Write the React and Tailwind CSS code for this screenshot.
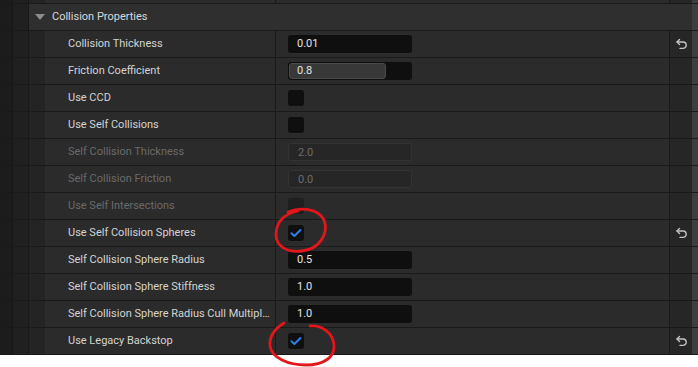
import React from 'react';

const rows = [
  { label: 'Collision Thickness', kind: 'num', value: '0.01', reset: true },
  { label: 'Friction Coefficient', kind: 'slider', value: '0.8' },
  { label: 'Use CCD', kind: 'check' },
  { label: 'Use Self Collisions', kind: 'check' },
  { label: 'Self Collision Thickness', kind: 'num', value: '2.0', disabled: true },
  { label: 'Self Collision Friction', kind: 'num', value: '0.0', disabled: true },
  { label: 'Use Self Intersections', kind: 'check', disabled: true },
  { label: 'Use Self Collision Spheres', kind: 'check', checked: true, reset: true },
  { label: 'Self Collision Sphere Radius', kind: 'num', value: '0.5' },
  { label: 'Self Collision Sphere Stiffness', kind: 'num', value: '1.0' },
  { label: 'Self Collision Sphere Radius Cull Multiplier', kind: 'num', value: '1.0' },
  { label: 'Use Legacy Backstop', kind: 'check', checked: true, reset: true },
];

function ResetIcon() {
  return (
    <svg width="13" height="12" viewBox="0 0 13 12" fill="none" stroke="#c4c4c4" strokeWidth="1.4" strokeLinecap="round" strokeLinejoin="round">
      <path d="M4.5 1.5 L2 4 L4.5 6.5" />
      <path d="M2 4 H8 a3.2 3.2 0 0 1 0 6.4 H5" />
    </svg>
  );
}

function Gutter() {
  return (
    <>
      <div className="w-[13px] shrink-0 bg-[#1c1c1c] border-r border-[#161616]" />
      <div className="w-[16px] shrink-0 bg-[#202020] border-r border-[#181818]" />
    </>
  );
}

function Value({ row }) {
  if (row.kind === 'check') {
    return (
      <div className={`w-4 h-4 rounded-[3px] flex items-center justify-center ${row.disabled ? 'bg-[#1f1f1f]' : 'bg-[#0f0f0f]'}`}>
        {row.checked && (
          <svg width="12" height="10" viewBox="0 0 12 10" fill="none" stroke="#2f7fe8" strokeWidth="2" strokeLinecap="round" strokeLinejoin="round">
            <path d="M1.5 5.2 L4.4 8 L10.5 2" />
          </svg>
        )}
      </div>
    );
  }
  if (row.kind === 'slider') {
    return (
      <div className="relative w-[124px] h-[18px] rounded-[3px] bg-[#0f0f0f]">
        <div className="absolute left-px top-px bottom-px w-[97px] rounded-[3px] bg-[#383838] border border-[#4a4a4a]" />
        <span className="relative pl-[9px] leading-[18px] text-[#e4e4e4]">{row.value}</span>
      </div>
    );
  }
  return (
    <div className={`w-[124px] h-[18px] rounded-[3px] pl-[9px] leading-[18px] ${row.disabled ? 'bg-[#262626] border border-[#333333] text-[#6c6c6c] leading-[16px]' : 'bg-[#0f0f0f] text-[#e4e4e4]'}`}>
      {row.value}
    </div>
  );
}

function Row({ row }) {
  return (
    <div className="flex h-[27px] border-b border-[#1a1a1a]">
      <Gutter />
      <div className="w-[16px] shrink-0 bg-[#242424]" />
      <div className="w-[231px] shrink-0 bg-[#2b2b2b] border-r border-[#1a1a1a] pl-[23px] pr-[3px] flex items-center">
        <span className={`truncate ${row.disabled ? 'text-[#6a6a6a]' : 'text-[#d4d4d4]'}`}>{row.label}</span>
      </div>
      <div className="flex-1 bg-[#2b2b2b] border-r border-[#1a1a1a] pl-[12px] flex items-center">
        <Value row={row} />
      </div>
      <div className="w-[22px] shrink-0 bg-[#262626] flex items-center justify-center pl-px">
        {row.reset && <ResetIcon />}
      </div>
      <div className="w-[6px] shrink-0 bg-[#3e3e3e]" />
    </div>
  );
}

export default function App() {
  return (
    <div className="relative w-[698px] h-[367px] bg-white overflow-hidden text-[11px]" style={{ fontFamily: 'Roboto, "Liberation Sans", sans-serif' }}>
      {/* partial row above */}
      <div className="flex h-[4px] border-b border-[#1a1a1a]">
        <Gutter />
        <div className="w-[16px] shrink-0 bg-[#242424]" />
        <div className="w-[231px] shrink-0 bg-[#2b2b2b] border-r border-[#1a1a1a]" />
        <div className="flex-1 bg-[#2b2b2b] border-r border-[#1a1a1a]" />
        <div className="w-[22px] shrink-0 bg-[#262626]" />
        <div className="w-[6px] shrink-0 bg-[#3e3e3e]" />
      </div>

      {/* category header */}
      <div className="flex h-[27px] border-b border-[#1a1a1a]">
        <Gutter />
        <div className="flex-1 bg-[#2f2f2f] flex items-center pl-[6px] gap-[7px]">
          <svg width="10" height="6" viewBox="0 0 10 6">
            <path d="M0 0 H10 L5 6 Z" fill="#8c8c8c" />
          </svg>
          <span className="text-[#d8d8d8]">Collision Properties</span>
        </div>
        <div className="w-[6px] shrink-0 bg-[#3e3e3e]" />
      </div>

      {rows.map((r) => (
        <Row key={r.label} row={r} />
      ))}

      {/* red hand-drawn annotations */}
      <svg className="absolute left-0 top-0 pointer-events-none" width="698" height="367" fill="none" stroke="#e3161b" strokeWidth="2.8" strokeLinecap="round" strokeLinejoin="round">
        <path d="M288 212 C300 207 318 208 324 220 C329 233 320 249 302 251 C287 253 276 246 276 235 C276 222 284 214 298 211" />
        <path d="M284 323 C276 328 269 336 270 346 C272 358 288 365 306 365 C324 365 335 357 334 345 C333 333 322 325 310 326" />
      </svg>
    </div>
  );
}
